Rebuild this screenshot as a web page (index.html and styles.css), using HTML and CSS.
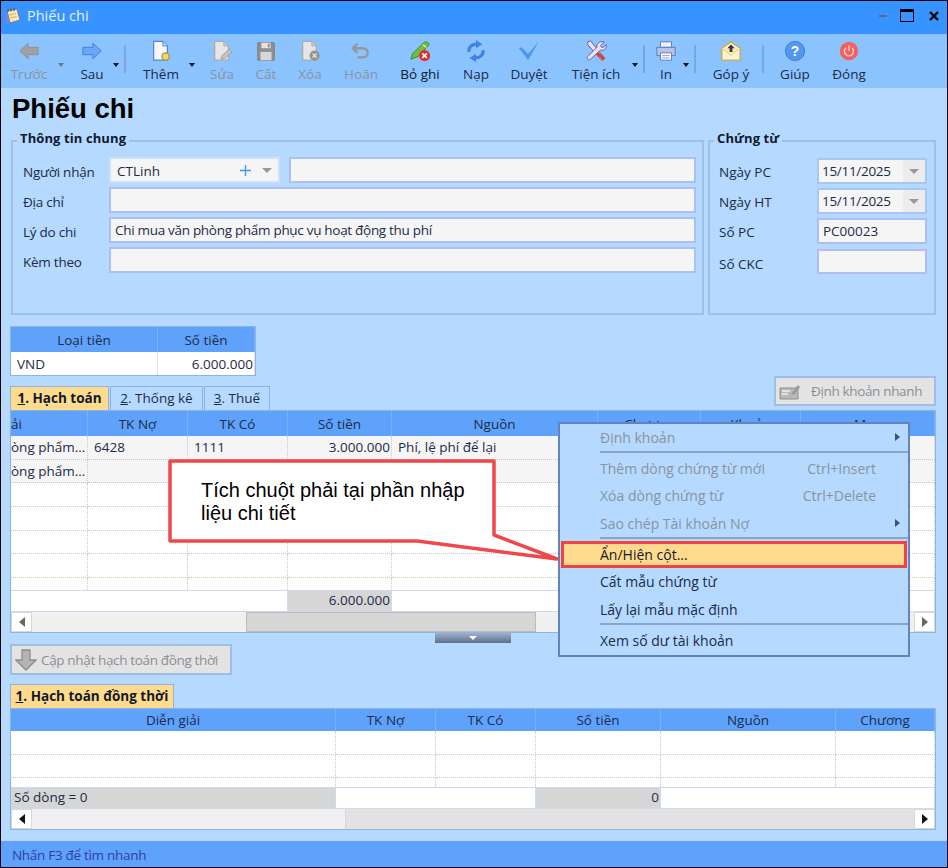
FILE: index.html
```html
<!DOCTYPE html>
<html lang="vi">
<head>
<meta charset="utf-8">
<title>Phiếu chi</title>
<link rel="stylesheet" href="styles.css">
</head>
<body>
<div class="window">
  <header class="titlebar">
    <svg class="title-icon" viewBox="0 0 18 18"><path d="M3 4l10-2 3 11-10 3z" fill="#f4e9b0" stroke="#7a6fb0"/><path d="M3 4l-1 11 4 1z" fill="#8a7fd0"/><path d="M4 2v3M7 1.500v3M10 1v3" stroke="#5a5a7a" stroke-width="1.200"/><path d="M5 8l7-1.500M5.500 11l7-1.500" stroke="#c9b96a"/></svg>
    <span class="title-text">Phiếu chi</span>
    <div class="win-controls">
      <span class="win-min"></span>
      <span class="win-max"></span>
      <svg class="win-close" viewBox="0 0 10 10"><path d="M1 1l8 8M9 1l-8 8" stroke="#000" stroke-width="2.400"/></svg>
    </div>
  </header>

  <nav class="toolbar">
    <div class="tool w42 off">
      <svg class="ico" viewBox="0 0 24 24"><path d="M2 12l9-8.500V8h11v8H11v4.500z" fill="#a0a0a0" stroke="#8f8f8f"/></svg>
      <span>Trước</span>
    </div>
    <i class="caret ml5 off-caret"></i>
    <div class="tool w36 ml7">
      <svg class="ico" viewBox="0 0 24 24"><path d="M22 12l-9-8.500V8H2v8h11v4.500z" fill="#6aa8f7" stroke="#3a7fe6"/></svg>
      <span>Sau</span>
    </div>
    <i class="caret"></i>
    <i class="sep ml2"></i>
    <div class="tool w46 ml12">
      <svg class="ico" viewBox="0 0 24 24"><path d="M4 1.500h10l5 5V22H4z" fill="#f6f7ff" stroke="#5d7ed0" stroke-width="1.300"/><path d="M14 1.500v5h5" fill="#c9d6f5" stroke="#5d7ed0"/><circle cx="17" cy="18" r="4" fill="#f4d765" stroke="#a8923c" stroke-width="1.300"/></svg>
      <span>Thêm</span>
    </div>
    <i class="caret ml2"></i>
    <div class="tool w44 ml2 off">
      <svg class="ico" viewBox="0 0 24 24"><path d="M4 1.500h10l5 5V22H4z" fill="#e6e6e6" stroke="#a9a9a9" stroke-width="1.300"/><path d="M14 1.500v5h5" fill="#cfcfcf" stroke="#a9a9a9"/><path d="M11 21l1-4 8-7 3 3-8 7z" fill="#c4c4c4" stroke="#9d9d9d"/></svg>
      <span>Sửa</span>
    </div>
    <div class="tool w44 off">
      <svg class="ico" viewBox="0 0 24 24"><path d="M3 3h18v19H3z" fill="#8f8f8f" stroke="#7d7d7d"/><path d="M7 3h10v6H7z" fill="#e2e2e2"/><path d="M14 4h2v4h-2z" fill="#8f8f8f"/><path d="M6 13h12v9H6z" fill="#d8d8d8"/></svg>
      <span>Cất</span>
    </div>
    <div class="tool w44 off">
      <svg class="ico" viewBox="0 0 24 24"><path d="M4 1.500h10l5 5V22H4z" fill="#e6e6e6" stroke="#a9a9a9" stroke-width="1.300"/><path d="M14 1.500v5h5" fill="#cfcfcf" stroke="#a9a9a9"/><circle cx="17" cy="17" r="5.500" fill="#949494"/><path d="M14.800 14.800l4.400 4.400M19.200 14.800l-4.400 4.400" stroke="#eee" stroke-width="1.300"/></svg>
      <span>Xóa</span>
    </div>
    <div class="tool w58 off">
      <svg class="ico" viewBox="0 0 24 24"><path d="M8 4L3 9l5 5M3 9h11c7 0 7 10 0 10H8" fill="none" stroke="#979797" stroke-width="2.600"/></svg>
      <span>Hoãn</span>
    </div>
    <div class="tool w60 on">
      <svg class="ico" viewBox="0 0 24 24"><path d="M2 21l2-6L16 3c2-2 6 0 6 2L10 18z" fill="#6fbf3c" stroke="#3d7f22"/><path d="M15 5l4 3" stroke="#c8e8a8" stroke-width="1.500"/><circle cx="17" cy="17" r="6" fill="#e62b2b"/><path d="M14.500 14.500l5 5M19.500 14.500l-5 5" stroke="#fff" stroke-width="1.800"/></svg>
      <span>Bỏ ghi</span>
    </div>
    <div class="tool w52">
      <svg class="ico" viewBox="0 0 24 24"><path d="M4.500 13c-1-5 3-9 9-8.500" fill="none" stroke="#3f84e0" stroke-width="3.400"/><path d="M12 0l7 4.500-7 4.500z" fill="#3f84e0"/><path d="M19.500 11c1 5-3 9-9 8.500" fill="none" stroke="#3f84e0" stroke-width="3.400"/><path d="M12 24l-7-4.500 7-4.500z" fill="#3f84e0"/></svg>
      <span>Nạp</span>
    </div>
    <div class="tool w54">
      <svg class="ico" viewBox="0 0 24 24"><path d="M1 9l3-1 7 7L23 1 11 22z" fill="#4f97ee"/></svg>
      <span>Duyệt</span>
    </div>
    <div class="tool w80">
      <svg class="ico" viewBox="0 0 24 24"><path d="M3 2l3-1 14 17c2 3-1 5-3 3L3 5z" fill="#e9e4f5" stroke="#6d4fa0"/><path d="M13 14l8 7" stroke="#d9412f" stroke-width="3.500"/><path d="M21 2l-4 4 1 2 2 0 3-3c1 4-2 7-6 6L6 21c-2 2-5-1-3-3l10-10c-1-4 3-7 8-6z" fill="#e9e4f5" stroke="#6d4fa0"/></svg>
      <span>Tiện ích</span>
    </div>
    <i class="caret caret-back"></i>
    <i class="sep ml2"></i>
    <div class="tool w30 ml6">
      <svg class="ico" viewBox="0 0 24 24"><path d="M6 2h12v6H6z" fill="#eef1fb" stroke="#5f78b0"/><path d="M2 8h20v9H2z" fill="#b6c4e6" stroke="#5f78b0"/><path d="M6 14h12v8H6z" fill="#fafbff" stroke="#5f78b0"/><path d="M8 17h8M8 19.500h8" stroke="#8ea3cf"/></svg>
      <span>In</span>
    </div>
    <i class="caret caret-back1"></i>
    <i class="sep ml2"></i>
    <div class="tool w50 ml10">
      <svg class="ico" viewBox="0 0 24 24"><path d="M2 9L12 2l10 7v13H2z" fill="#fdf4d4" stroke="#c9a94e" stroke-width="1.500"/><path d="M2 9l10 8 10-8" fill="#fbe9b0" stroke="#e0c97c"/><path d="M12 5l4 4h-2.500v4h-3V9H8z" fill="#33363c"/></svg>
      <span>Góp ý</span>
    </div>
    <i class="sep ml6"></i>
    <div class="tool w40 ml11">
      <svg class="ico" viewBox="0 0 24 24"><circle cx="12" cy="12" r="10.500" fill="#5398ee" stroke="#3a7cd0"/><text x="12" y="17.500" class="q-mark">?</text></svg>
      <span>Giúp</span>
    </div>
    <div class="tool w50 ml9">
      <svg class="ico" viewBox="0 0 24 24"><circle cx="12" cy="12" r="10" fill="#f2605f"/><path d="M8.700 8.500a5 5 0 1 0 6.600 0" fill="none" stroke="#fbd5d5" stroke-width="1.500"/><path d="M12 6v6" stroke="#fbd5d5" stroke-width="1.500"/></svg>
      <span>Đóng</span>
    </div>
  </nav>

  <main class="content">
    <h1 class="page-title">Phiếu chi</h1>

    <div class="groups">
      <section class="group group-main">
        <h2 class="legend">Thông tin chung</h2>
        <div class="form-row">
          <label>Người nhận</label>
          <div class="pair">
            <div class="field combo">
              <span class="combo-val">CTLinh</span>
              <svg class="plus" viewBox="0 0 11 11"><path d="M5.500 0v11M0 5.500h11" stroke="#3f9be8" stroke-width="1.300"/></svg>
              <i class="drop"></i>
            </div>
            <div class="field grow"></div>
          </div>
        </div>
        <div class="form-row"><label>Địa chỉ</label><div class="field"></div></div>
        <div class="form-row"><label>Lý do chi</label><div class="field tight">Chi mua văn phòng phẩm phục vụ hoạt động thu phí</div></div>
        <div class="form-row"><label>Kèm theo</label><div class="field"></div></div>
      </section>

      <section class="group group-doc">
        <h2 class="legend legend-doc">Chứng từ</h2>
        <div class="doc-row"><label>Ngày PC</label><div class="field date"><span class="tight">15/11/2025</span><b class="date-btn"><i class="drop"></i></b></div></div>
        <div class="doc-row"><label>Ngày HT</label><div class="field date"><span class="tight">15/11/2025</span><b class="date-btn"><i class="drop"></i></b></div></div>
        <div class="doc-row tall"><label>Số PC</label><div class="field">PC00023</div></div>
        <div class="doc-row tall"><label class="low-label">Số CKC</label><div class="field"></div></div>
      </section>
    </div>

    <table class="money">
      <thead><tr><th class="m1">Loại tiền</th><th class="m2">Số tiền</th></tr></thead>
      <tbody><tr><td>VND</td><td class="num">6.000.000</td></tr></tbody>
    </table>

    <div class="tabs-row">
      <div class="tabs">
        <span class="tab active t1"><u>1</u>. Hạch toán</span>
        <span class="tab t2"><u>2</u>. Thống kê</span>
        <span class="tab t3"><u>3</u>. Thuế</span>
      </div>
      <button class="btn btn-quick">
        <svg class="btn-ico" viewBox="0 0 22 18"><path d="M1 6h18v11H1z" fill="#b9b9b9" stroke="#8f8f8f"/><path d="M3 9h8M3 12h6" stroke="#eee" stroke-width="1.500"/><path d="M12 12l7-9 2 2-6 8z" fill="#9a9a9a"/></svg>
        Định khoản nhanh
      </button>
    </div>

    <div class="grid-box grid-top">
      <table class="grid">
        <colgroup><col class="c77"><col class="c100"><col class="c100"><col class="c104"><col class="c206"><col class="c103"><col class="c100"><col class="c134"></colgroup>
        <thead><tr><th class="clip">ải</th><th>TK Nợ</th><th>TK Có</th><th>Số tiền</th><th>Nguồn</th><th>Chương</th><th>Khoản</th><th>Mục</th></tr></thead>
        <tbody>
          <tr class="filled"><td class="clip">òng phẩm...</td><td>6428</td><td>1111</td><td class="num">3.000.000</td><td>Phí, lệ phí để lại</td><td></td><td></td><td></td></tr>
          <tr class="filled"><td class="clip">òng phẩm...</td><td></td><td></td><td></td><td></td><td></td><td></td><td></td></tr>
          <tr><td></td><td></td><td></td><td></td><td></td><td></td><td></td><td></td></tr>
          <tr><td></td><td></td><td></td><td></td><td></td><td></td><td></td><td></td></tr>
          <tr><td></td><td></td><td></td><td></td><td></td><td></td><td></td><td></td></tr>
          <tr><td></td><td></td><td></td><td></td><td></td><td></td><td></td><td></td></tr>
          <tr class="partial"><td></td><td></td><td></td><td></td><td></td><td></td><td></td><td></td></tr>
        </tbody>
        <tfoot><tr><td colspan="3"></td><td class="num sum">6.000.000</td><td colspan="4"></td></tr></tfoot>
      </table>
      <div class="scrollbar">
        <span class="sb-btn"><i class="arr-l"></i></span>
        <span class="sb-track sb-a"></span>
        <span class="sb-thumb sb-b"></span>
        <span class="sb-track grow"></span>
        <span class="sb-btn"><i class="arr-r"></i></span>
      </div>
    </div>

    <div class="splitter"><i></i></div>

    <button class="btn btn-update">
      <svg class="btn-ico2" viewBox="0 0 22 22"><path d="M7 1h8v10h6L11 21 1 11h6z" fill="#b4b4b4" stroke="#8d8d8d" stroke-width="1.300"/></svg>
      Cập nhật hạch toán đồng thời
    </button>

    <div class="tabs tabs-low"><span class="tab active t4"><u>1</u>. Hạch toán đồng thời</span></div>

    <div class="grid-box grid-low">
      <table class="grid">
        <colgroup><col class="d1"><col class="c100"><col class="c100"><col class="d4"><col class="d5"><col class="c99"></colgroup>
        <thead><tr><th>Diễn giải</th><th>TK Nợ</th><th>TK Có</th><th>Số tiền</th><th>Nguồn</th><th>Chương</th></tr></thead>
        <tbody>
          <tr><td></td><td></td><td></td><td></td><td></td><td></td></tr>
          <tr><td></td><td></td><td></td><td></td><td></td><td></td></tr>
          <tr class="partial2"><td></td><td></td><td></td><td></td><td></td><td></td></tr>
        </tbody>
        <tfoot><tr><td class="sum sum-left">Số dòng = 0</td><td colspan="2"></td><td class="num sum">0</td><td colspan="2"></td></tr></tfoot>
      </table>
      <div class="scrollbar">
        <span class="sb-btn"><i class="arr-l dark"></i></span>
        <span class="sb-track sb-c"></span>
        <span class="sb-thumb light grow"></span>
        <span class="sb-btn"><i class="arr-r dark"></i></span>
      </div>
    </div>
  </main>

  <footer class="statusbar">Nhấn F3 để tìm nhanh</footer>

  <ul class="menu">
    <li class="off-item has-sub first">Định khoản</li>
    <li class="rule"></li>
    <li class="off-item"><span>Thêm dòng chứng từ mới</span><kbd>Ctrl+Insert</kbd></li>
    <li class="off-item"><span>Xóa dòng chứng từ</span><kbd>Ctrl+Delete</kbd></li>
    <li class="off-item has-sub">Sao chép Tài khoản Nợ</li>
    <li class="rule"></li>
    <li class="picked">Ẩn/Hiện cột...</li>
    <li>Cất mẫu chứng từ</li>
    <li>Lấy lại mẫu mặc định</li>
    <li class="rule"></li>
    <li>Xem số dư tài khoản</li>
  </ul>

  <div class="callout">
    <svg class="callout-shape" viewBox="0 0 396 104"><path d="M2 2H326V76L389 100 249 82H2z" fill="#fff" stroke="#f0474a" stroke-width="3.500" stroke-linejoin="round"/></svg>
    <p class="callout-text">Tích chuột phải tại phần nhập liệu chi tiết</p>
  </div>
</div>
</body>
</html>
```
FILE: styles.css
```css
* { box-sizing: border-box; }
html, body { margin: 0; padding: 0; }
body { font-family: "Open Sans", "Noto Sans", sans-serif; font-size: 13px; color: #1d2b46; }
.window { position: relative; width: 948px; height: 868px; border: 1px solid #000; display: flex; flex-direction: column; background: #b5d9ff; overflow: hidden; }

/* title bar */
.titlebar { height: 33px; flex: none; background: #3793ff; display: flex; align-items: center; padding: 0 0 4px 3px; }
.title-icon { width: 18px; height: 18px; }
.title-text { margin-left: 5px; color: #e4f0ff; font-size: 14.500px; }
.win-controls { margin-left: auto; display: flex; align-items: center; }
.win-min { width: 8px; height: 2px; background: #667; margin-right: 13px; }
.win-max { width: 14px; height: 13px; border: 1.500px solid #000; border-top-width: 3px; margin-right: 15px; }
.win-close { width: 10px; height: 10px; margin-right: 8px; }

/* toolbar */
.toolbar { height: 54px; flex: none; background: #8bc3ff; display: flex; padding: 4px 0 0 7px; align-items: flex-start; }
.tool { display: flex; flex-direction: column; align-items: center; flex: none; font-size: 13.500px; color: #1d2b46; white-space: nowrap; }
.tool .ico { width: 22px; height: 22px; margin-top: 2px; margin-bottom: 2px; }
.tool span { line-height: 20px; }
.tool.off { color: #8a939d; }
.tool.on { color: #111a2c; }
.w30 { width: 30px; } .w36 { width: 36px; } .w40 { width: 40px; } .w42 { width: 42px; } .w44 { width: 44px; }
.w46 { width: 46px; } .w50 { width: 50px; } .w52 { width: 52px; } .w54 { width: 54px; } .w58 { width: 58px; }
.w60 { width: 60px; } .w80 { width: 80px; }
.ml2 { margin-left: 2px; } .ml5 { margin-left: 5px; } .ml6 { margin-left: 6px; } .ml7 { margin-left: 7px; }
.ml9 { margin-left: 9px; } .ml10 { margin-left: 10px; } .ml11 { margin-left: 11px; } .ml12 { margin-left: 12px; }
.caret { flex: none; width: 12px; height: 5px; margin-top: 25px; position: relative; }
.caret::after { content: ""; position: absolute; left: 3px; top: 0; border: 3.500px solid transparent; border-top: 4px solid #111; border-bottom: 0; }
.caret.off-caret::after { border-top-color: #6f7680; }
.caret-back { margin-left: -7px; }
.caret-back1 { margin-left: -1px; }
.sep { flex: none; width: 2px; height: 28px; margin-top: 7px; background: #6f9fd4; opacity: .75; }

/* content */
.content { flex: 1; padding: 0 0 0 9px; min-height: 0; }
.page-title { margin: 0; height: 52px; padding: 4px 0 0 2px; font: bold 27.500px/34px "Liberation Sans", sans-serif; color: #000; }

.groups { display: flex; gap: 4px; margin-left: 1px; height: 175px; }
.group { position: relative; border: 2px solid #a0bfe9; height: 175px; }
.group-main { width: 693px; padding: 15px 6px 0 10px; display: flex; flex-direction: column; gap: 4px; }
.group-doc { width: 228px; padding: 16px 7px 0 9px; display: flex; flex-direction: column; gap: 6px; }
.legend { position: absolute; top: -13px; left: 4px; margin: 0; padding: 0 3px; background: #b5d9ff; font-size: 13px; letter-spacing: .1px; line-height: 18px; font-weight: 700; color: #111a2c; }
.legend-doc { left: 4px; }
label { display: block; color: #1d2b46; font-size: 13.500px; padding-top: 3px; }
.group-main label { letter-spacing: -.25px; }
.doc-row label { padding-top: 1px; }
.doc-row .low-label { padding-top: 4px; }
.form-row { display: grid; grid-template-columns: 86px 1fr; align-items: center; height: 26px; }
.field { height: 100%; background: #f5f5f5; border: 2px solid #adbff0; padding: 0 4px; line-height: 22px; font-size: 13.500px; white-space: nowrap; min-width: 0; }
.tight { letter-spacing: -.3px; }
.pair { display: flex; gap: 9px; height: 26px; }
.combo { width: 171px; flex: none; display: flex; align-items: center; border-color: #cfe0fa; padding: 0 6px; }
.combo-val { flex: 1; padding-top: 2px; }
.plus { width: 11px; height: 11px; margin-right: 11px; }
.drop { display: block; width: 0; height: 0; border: 5px solid transparent; border-top: 5px solid #999; border-bottom: 0; }
.grow { flex: 1; }
.doc-row { display: grid; grid-template-columns: 98px 110px; align-items: center; height: 24px; }
.doc-row.tall { height: 25px; }
.date { display: flex; align-items: center; justify-content: space-between; padding: 0 0 0 3px; border-color: #a7c6f2; }
.date-btn { width: 22px; height: 100%; background: #ececec; display: flex; align-items: center; justify-content: center; }

/* money table */
.money { margin: 11px 0 0 0; width: 246px; height: 50px; border-spacing: 0; table-layout: fixed; border: 1px solid #8fb2e0; background: #fff; }
.money th { height: 25px; background: #5fa2fb; font-weight: 400; font-size: 13.500px; padding: 0; border-right: 1px solid #78b0fa; }
.money td { height: 23px; font-size: 13.500px; padding: 0 1px 0 6px; border-right: 1px dotted #ccc; }
.m1 { width: 147px; }
.num { text-align: right; }

/* tabs */
.tabs-row { display: flex; justify-content: space-between; align-items: flex-end; width: 926px; height: 34px; }
.tabs { display: flex; gap: 1px; }
.tab { height: 24px; padding-bottom: 2px; border: 1px solid #8fb2e0; border-bottom: 0; display: flex; align-items: center; justify-content: center; font-size: 13.500px; white-space: pre; }
.tab.active { background: #ffdb8d; font-weight: 700; color: #111a2c; }
.t1 { width: 99px; } .t2 { width: 93px; } .t3 { width: 66px; } .t4 { width: 164px; }
.tabs-low { margin-top: 9px; }
.btn { font: inherit; font-size: 13.500px; letter-spacing: -.35px; background: #e3e3e3; color: #8a8f96; border: 2px solid #a0bde4; display: flex; align-items: center; padding: 0; }
.btn-quick { width: 162px; height: 30px; margin: 0 0 4px 0; padding-left: 3px; }
.btn-ico { width: 22px; height: 18px; margin-right: 10px; }
.btn-update { width: 222px; height: 31px; margin-top: 1px; padding-left: 3px; }
.btn-ico2 { width: 22px; height: 22px; margin-right: 4px; }

/* grids */
.grid-box { width: 926px; border: 1px solid #8fb2e0; background: #fff; display: flex; flex-direction: column; }
.grid-top { height: 223px; }
.grid-low { height: 122px; }
.grid { width: 924px; border-spacing: 0; table-layout: fixed; flex: none; }
.grid th { height: 25px; padding: 0; background: #5fa2fb; font-weight: 400; font-size: 13.500px; border-right: 1px solid #78b0fa; white-space: nowrap; overflow: hidden; }
.grid-low .grid th { height: 22px; padding: 0; }
.grid td { height: 23.700px; padding: 0 1px 0 6px; font-size: 13.500px; border-right: 1px dotted #c8c8c8; border-bottom: 1px dotted #c8c8c8; white-space: nowrap; overflow: hidden; }
.grid th.clip { text-align: left; }
.grid .clip { padding-left: 0; }
.grid .filled td { background: #f5f5f5; }
.grid .partial td { height: 12px; border-bottom: 0; padding: 0; }
.grid .partial2 td { height: 9px; border-bottom: 0; padding: 0; }
.grid tfoot td { height: 20px; padding-bottom: 2px; border: 0; border-top: 1px solid #cbdcf0; border-right: 1px solid #cbdcf0; background: #fff; }
.grid tfoot td.sum { background: #d6d6d6; }
.grid tfoot td.sum-left { padding-left: 3px; }
.scrollbar { flex: 1; display: flex; min-height: 0; border-top: 1px solid #cbdcf0; background: #f0f0f0; }
.sb-btn { width: 21px; flex: none; background: #fff; border: 1px solid #d8d8d8; display: flex; align-items: center; justify-content: center; }
.sb-track { background: #f0f0f0; }
.sb-a { width: 214px; }
.sb-b { width: 290px; }
.sb-c { width: 314px; border-right: 1px solid #cfd9e6; }
.sb-thumb { background: #d6d6d6; border: 1px solid #bcbcbc; }
.sb-thumb.light { background: #e2e2e2; border: 0; }
.arr-l, .arr-r { width: 0; height: 0; border: 5px solid transparent; }
.arr-l { border-left: 0; border-right: 6px solid #666; }
.arr-r { border-right: 0; border-left: 6px solid #666; }
.arr-l.dark { border-right-color: #111; }
.arr-r.dark { border-left-color: #111; }

.splitter { width: 76px; height: 10px; margin-left: 425px; background: linear-gradient(#9fb1cc, #5f6f8a); display: flex; justify-content: center; padding-top: 3px; }
.splitter i { width: 0; height: 0; border: 4px solid transparent; border-top: 4px solid #fff; border-bottom: 0; }

/* status */
.statusbar { height: 26px; flex: none; background: #5fa2fb; color: #33409f; padding-left: 11px; line-height: 28px; font-size: 13.500px; letter-spacing: -.3px; }

/* context menu */
.menu { position: absolute; left: 557px; top: 421px; width: 352px; height: 235px; margin: 0; padding: 0; list-style: none; background: #b5d9ff; border: 2px solid #6482bd; font-size: 14px; color: #1d2b46; }
.menu li { height: 27.500px; line-height: 27px; padding: 0 32px 0 40px; display: flex; justify-content: space-between; position: relative; white-space: nowrap; }
.menu li.first { height: 27px; }
.menu li.rule { height: 2px; margin: 0 0 1.500px 40px; padding: 0; background: #8ba3c4; }
.menu .off-item { color: #8a939d; }
.menu kbd { font: inherit; }
.menu .has-sub::after { content: ""; position: absolute; right: 8px; top: 9px; border: 4.500px solid transparent; border-left: 5px solid #47505c; border-right: 0; }
.menu .picked { background: #ffd98c; outline: 3px solid #ef4346; outline-offset: -3px; margin: 0 1px; padding-left: 39px; color: #111a2c; }

/* callout */
.callout { position: absolute; left: 167px; top: 458px; width: 396px; height: 104px; }
.callout-shape { display: block; width: 396px; height: 104px; }
.callout-text { position: absolute; left: 33px; top: 20px; width: 275px; margin: 0; font: 20px/23px "Liberation Sans", sans-serif; color: #000; }

/* misc cols */
.c77 { width: 77px; } .c99 { width: 99px; } .c100 { width: 100px; } .c103 { width: 103px; } .c104 { width: 104px; } .c134 { width: 134px; } .c206 { width: 206px; }
.d1 { width: 325px; } .d4 { width: 125px; } .d5 { width: 175px; }
.q-mark { font: bold 15px "Liberation Sans", sans-serif; fill: #fff; text-anchor: middle; }
```
